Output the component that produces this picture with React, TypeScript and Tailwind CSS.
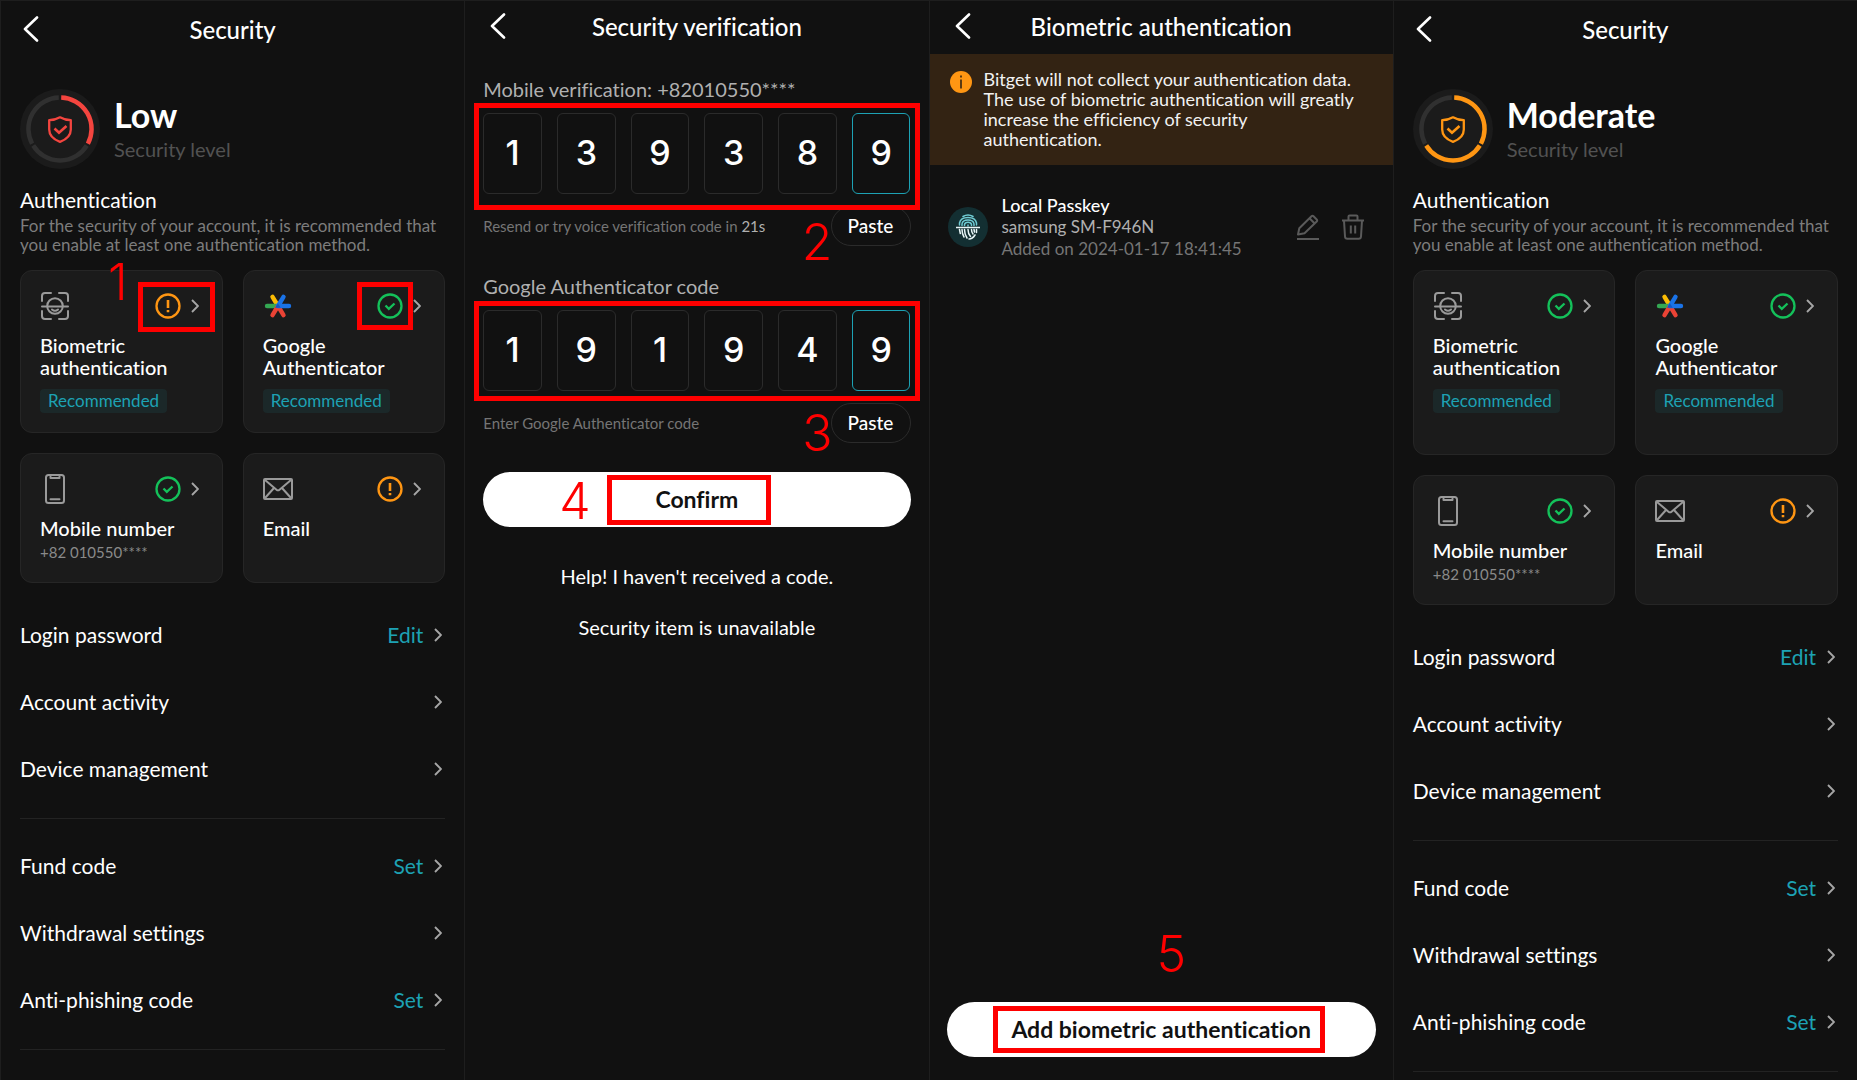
import React from "react";
import { clsx } from "clsx";

type Status = "ok" | "warn";
type IconName = "face" | "google" | "phone" | "mail";

interface Method {
  icon: IconName;
  title: string;
  status: Status;
  recommended?: boolean;
  note?: string;
  statusMark?: boolean;
  rowMark?: boolean;
}

interface Item {
  label: string;
  action?: string;
}

const groups: Item[][] = [
  [
    { label: "Login password", action: "Edit" },
    { label: "Account activity" },
    { label: "Device management" },
  ],
  [
    { label: "Fund code", action: "Set" },
    { label: "Withdrawal settings" },
    { label: "Anti-phishing code", action: "Set" },
  ],
];

function BackIcon() {
  return (
    <svg viewBox="0 0 16 26" className="h-[26px] w-4" fill="none" stroke="white" strokeWidth="2.6" strokeLinecap="round" strokeLinejoin="round">
      <path d="M14 1.500 2 13l12 11.500" />
    </svg>
  );
}

function Chevron() {
  return (
    <svg viewBox="0 0 8 14" className="h-3.5 w-2 shrink-0" fill="none" stroke="#a6a6a6" strokeWidth="1.9">
      <path d="m1 1 6 6-6 6" />
    </svg>
  );
}

function StatusIcon({ status }: { status: Status }) {
  return status === "ok" ? (
    <svg viewBox="0 0 26 26" className="size-[26px]" fill="none" stroke="#14c15a" strokeWidth="2.300">
      <circle cx="13" cy="13" r="11.500" />
      <path d="m8.500 12.500 3.300 3.300 5.700-5.300" />
    </svg>
  ) : (
    <svg viewBox="0 0 26 26" className="size-[26px]" fill="none" stroke="#ff9613" strokeWidth="2.300">
      <circle cx="13" cy="13" r="11.500" />
      <path d="M13 7v8M13 17v2.200" strokeWidth="2.600" />
    </svg>
  );
}

function MethodIcon({ name }: { name: IconName }) {
  const line = { fill: "none", stroke: "#9a9a9a", strokeWidth: 2, strokeLinecap: "round", strokeLinejoin: "round" } as const;
  if (name === "google") {
    return (
      <svg viewBox="0 0 30 30" className="size-[30px]" fill="none" strokeWidth="4.400" strokeLinecap="round">
        <path d="M15 15 9.500 5.800" stroke="#fbbc04" />
        <path d="M15 15H4" stroke="#34a853" />
        <path d="M15 15 9.500 24.200M15 15l5.500 9.200" stroke="#ea4335" />
        <path d="m15 15 5.500-9.200M15 15h11" stroke="#1a73e8" />
        <path d="m14.900 12.200 2.800 4.600h-5.600z" fill="#1557c0" />
      </svg>
    );
  }
  if (name === "face") {
    return (
      <svg viewBox="0 0 30 30" className="size-[30px]" {...line}>
        <path d="M2 10V5q0-3 3-3h6M19 2h6q3 0 3 3v5M28 20v5q0 3-3 3h-6M11 28H5q-3 0-3-3v-5M2 15.500h26" />
        <circle cx="15" cy="15" r="7.800" />
        <path d="M12 18.500q3 2.600 6 0" />
      </svg>
    );
  }
  if (name === "phone") {
    return (
      <svg viewBox="0 0 30 30" className="size-[30px]" {...line}>
        <rect x="6" y="1" width="18" height="28" rx="2.500" />
        <path d="M10.500 2.500v1.500h9V2.500M10.500 25.300h9" />
      </svg>
    );
  }
  return (
    <svg viewBox="0 0 30 30" className="size-[30px]" {...line}>
      <rect x="1" y="5" width="28" height="20" rx="1" />
      <path d="m2 6 11.500 9.700q1.500 1.200 3 0L28 6M2 24l9-10M28 24l-9-10" />
    </svg>
  );
}

function LevelRing({ level }: { level: 1 | 2 }) {
  const color = level === 1 ? "#f4453f" : "#ff9613";
  return (
    <svg viewBox="0 0 80 80" className="size-20" fill="none" stroke="#303030">
      <circle cx="40" cy="40" r="40" fill="#1b1b1b" stroke="none" />
      <g strokeWidth="4.500">
        <path d="M41.200 8.500A31.500 31.500 0 0 1 67.900 54.700" stroke={color} />
        <path d="M66.800 56.500A31.500 31.500 0 0 1 13.200 56.500" stroke={level === 2 ? color : "#303030"} />
        <path d="M12.100 54.700A31.500 31.500 0 0 1 38.800 8.500" />
      </g>
      <path d="M40 28.300c3.500 2 7 2.900 10.800 2.900v9.300c0 6-4.400 10-10.800 12.300-6.400-2.300-10.800-6.300-10.800-12.300v-9.300c3.800 0 7.300-.9 10.800-2.900z" stroke={color} strokeWidth="2.300" strokeLinejoin="round" />
      <path d="m34.500 39.500 4.500 4.300 7.500-6.800" stroke={color} strokeWidth="2.600" />
    </svg>
  );
}

// Red frame drawn around the element it is placed in.
function Frame({ className }: { className: string }) {
  return <span aria-hidden="true" className={clsx("pointer-events-none absolute border-[5px] border-[#fe0000]", className)} />;
}

function Step({ children, className }: { children: React.ReactNode; className: string }) {
  return (
    <span className={clsx("pointer-events-none absolute z-10 font-['Inter'] text-[50px] leading-[50px] font-light text-[#fe0000]", className)}>
      {children}
    </span>
  );
}

function Header({ title, tall }: { title: string; tall?: boolean }) {
  return (
    <header className={clsx("relative flex justify-center", tall ? "h-[59px] pt-[13px]" : "h-[53px] pt-2.5")}>
      <button type="button" aria-label="Back" className={clsx("absolute", tall ? "top-[15px] left-[22px]" : "top-3 left-[25px]")}>
        <BackIcon />
      </button>
      <h1 className="text-2xl font-medium">{title}</h1>
    </header>
  );
}

function MethodCard({ method, roomy }: { method: Method; roomy?: boolean }) {
  return (
    <div className={clsx(
      "rounded-xl border border-[#262626] bg-[#1b1b1b] px-[19px] pt-5",
      method.recommended ? (roomy ? "h-[185px]" : "h-[163px]") : "h-[130px]"
    )}>
      <div className="flex items-center justify-between">
        <MethodIcon name={method.icon} />
        <button type="button" aria-label={`Open ${method.title}`} className="relative flex items-center gap-2.5 pr-1">
          <StatusIcon status={method.status} />
          <Chevron />
          {method.rowMark && <Frame className="-top-[11px] -right-3 h-[50px] w-[77px]" />}
          {method.statusMark && <Frame className="-top-[11px] -left-5 h-12 w-14" />}
        </button>
      </div>
      <h3 className={clsx("mt-[13px] text-[20px] leading-[22px] font-medium", method.recommended && "max-w-[140px]")}>{method.title}</h3>
      {method.recommended && (
        <span className="mt-[11px] inline-block h-6 rounded bg-[#1b2829] px-2 text-[17px] leading-[23px] text-[#1da2b4]">Recommended</span>
      )}
      {method.note && <p className="mt-0.5 text-[15px] leading-[22px] text-[#8a8a8a]">{method.note}</p>}
    </div>
  );
}

interface SecurityProps {
  level: 1 | 2;
  levelName: string;
  methods: Method[];
  step?: string;
}

function SecurityPanel({ level, levelName, methods, step }: SecurityProps) {
  return (
    <section className="border-t border-l border-[#1e1e1e]">
      <Header title="Security" tall />
      <div className="px-[19px] pt-[29px]">
        <div className="flex items-center gap-3.5">
          <LevelRing level={level} />
          <div className="pt-0.5">
            <p className="text-[34px] leading-[38px] font-bold">{levelName}</p>
            <p className="text-[20px] leading-[30px] text-[#525252]">Security level</p>
          </div>
        </div>
        <h2 className="mt-[19px] text-[21px] leading-6">Authentication</h2>
        <div className="relative">
          <p className="mt-1 text-[17px] leading-[19px] text-[#7d7d7d]">
            For the security of your account, it is recommended that you enable at least one authentication method.
          </p>
          {step && <Step className="top-[41px] left-[88px]">{step}</Step>}
        </div>
        <div className="mt-4 grid grid-cols-2 gap-5">
          {methods.map((m) => <MethodCard key={m.title} method={m} roomy={level === 2} />)}
        </div>
        <div className="mt-[5px]">
          {groups.map((items) => (
            <ul key={items[0].label} className="border-b border-[#232323] pt-[13px] pb-4">
              {items.map((item) => (
                <li key={item.label}>
                  <a href="#" className="flex h-[67px] items-center pr-[3px] text-[21px]">
                    <span>{item.label}</span>
                    <span className="mr-[11px] ml-auto text-[#1da2b4]">{item.action}</span>
                    <Chevron />
                  </a>
                </li>
              ))}
            </ul>
          ))}
        </div>
      </div>
    </section>
  );
}

interface CodeProps {
  label: string;
  code: string;
  hint: React.ReactNode;
  step: string;
  stepClass: string;
  frameClass: string;
}

function CodeField({ label, code, hint, step, stepClass, frameClass }: CodeProps) {
  return (
    <fieldset>
      <legend className="text-[20px] leading-6 text-[#b0b0b0]">{label}</legend>
      <div className="relative mt-3 grid grid-cols-6 gap-[15px]">
        {code.split("").map((digit, i) => (
          <input
            key={i}
            aria-label={`${label} digit ${i + 1}`}
            defaultValue={digit}
            maxLength={1}
            inputMode="numeric"
            className={clsx(
              "h-[81px] w-full min-w-0 rounded-md border bg-transparent pb-0.5 text-center font-['Inter'] text-[34px] font-medium outline-none",
              i === 5 ? "border-[#1da2b4]" : "border-[#2b2b2b]"
            )}
          />
        ))}
        <Frame className={clsx("z-10", frameClass)} />
      </div>
      <div className="relative mt-3 flex items-center justify-between">
        <p className="text-[15px] text-[#757575]">{hint}</p>
        <button type="button" className="h-10 w-20 rounded-full border border-[#2b2b2b] text-[19px] font-medium">Paste</button>
        <Step className={stepClass}>{step}</Step>
      </div>
    </fieldset>
  );
}

function VerificationPanel() {
  return (
    <section className="border-t border-l border-[#1e1e1e]">
      <Header title="Security verification" />
      <div className="px-[18px] pt-[23px]">
        <div className="flex flex-col gap-7">
          <CodeField
            label="Mobile verification: +82010550****"
            code="139389"
            hint={<>Resend or try voice verification code in <span className="text-[#b0b0b0]">21s</span></>}
            step="2"
            stepClass="top-[11px] right-[78px]"
            frameClass="-inset-x-[9px] -top-2.5 -bottom-4"
          />
          <CodeField
            label="Google Authenticator code"
            code="191949"
            hint="Enter Google Authenticator code"
            step="3"
            stepClass="top-[5px] right-[78px]"
            frameClass="-inset-x-[9px] -top-[9px] -bottom-2.5"
          />
        </div>
        <button type="button" className="relative mt-[29px] h-[55px] w-full rounded-full bg-white text-[23px] font-bold text-[#111]">
          Confirm
          <Frame className="top-[3px] left-[124px] h-[50px] w-[164px]" />
          <Step className="top-1 left-[76px]">4</Step>
        </button>
        <div className="mt-[34px] flex flex-col items-center gap-[21px] text-[20px] leading-[30px]">
          <a href="#">Help! I haven't received a code.</a>
          <a href="#">Security item is unavailable</a>
        </div>
      </div>
    </section>
  );
}

function BiometricPanel() {
  return (
    <section className="flex flex-col border-t border-l border-[#1e1e1e]">
      <Header title="Biometric authentication" />
      <div className="flex gap-3 bg-[#332313] pt-[15px] pr-6 pb-4 pl-5">
        <svg viewBox="0 0 22 22" className="mt-0.5 size-[22px] shrink-0">
          <circle cx="11" cy="11" r="11" fill="#ff9613" />
          <path d="M11 4.500v2M11 8.500v9" stroke="#332313" strokeWidth="1.600" />
        </svg>
        <p className="text-[18px] leading-5 text-[#f2f2f2]">
          Bitget will not collect your authentication data. The use of biometric authentication will greatly increase the efficiency of security authentication.
        </p>
      </div>
      <div className="mt-[29px] flex items-center px-[18px]">
        <span className="flex size-10 items-center justify-center rounded-full bg-[#132f32]">
          <svg viewBox="0 0 24 26" className="h-[26px] w-6" fill="none" stroke="#6fcbd3" strokeWidth="1.500" strokeLinecap="round">
            <path d="M7 2.500Q12-.5 17 2.500M3.500 11V9q1-5.500 8.500-5.500T20.500 9v2M6 11.500V10q.5-4 6-4t6 4v1.500M8.500 11.500v-1q.5-2.200 3.500-2.200t3.500 2.200v1M12 11v1" />
            <path d="M0 13.500h24M3.500 15.500l.8 4M6 15.500q0 4.500 2 7.500M8.500 15.500q0 4.500 2.500 8.500M12 15.500q0 4 2.500 7M15.500 15.500q0 2.500 1.500 4.500M18 15.500l.5 2.500M13 25q3.500 0 6-4M20.500 15.500v3" stroke="#e8f6f7" />
          </svg>
        </span>
        <div className="ml-3.5 text-[17px] leading-[22px]">
          <h2 className="text-[18px] leading-[22px] font-medium">Local Passkey</h2>
          <p className="text-[#b0b0b0]">samsung SM-F946N</p>
          <p className="text-[#757575]">Added on 2024-01-17 18:41:45</p>
        </div>
        <div className="mr-2.5 ml-auto flex gap-[21px]">
          <button type="button" aria-label="Rename passkey">
            <svg viewBox="0 0 24 26" className="h-[26px] w-6" fill="none" stroke="#5a5a5a" strokeWidth="2" strokeLinejoin="round">
              <path d="M1 25h22M2 20.500l1.300-6.300L15.500 2.300q1-1 2 0L20.700 5.500q1 1 0 2L8.500 19.200zM13.500 4.300l5.200 5.200" />
            </svg>
          </button>
          <button type="button" aria-label="Delete passkey">
            <svg viewBox="0 0 24 26" className="h-[26px] w-6" fill="none" stroke="#5a5a5a" strokeWidth="2" strokeLinejoin="round">
              <path d="M1 6.500h22M7.500 6V2.500q0-1 1-1h7q1 0 1 1V6M3 6.500l1 16q.2 2.300 2.300 2.300h11.400q2.100 0 2.300-2.300l1-16M9.800 11.500v8M14.200 11.500v8" />
            </svg>
          </button>
        </div>
      </div>
      <div className="mt-auto px-[17px] pb-[23px]">
        <button type="button" className="relative h-[55px] w-full rounded-full bg-white text-[23px] font-bold text-[#111]">
          Add biometric authentication
          <Frame className="top-1 right-[51px] bottom-1 left-[46px]" />
          <Step className="-top-[73px] left-[210px]">5</Step>
        </button>
      </div>
    </section>
  );
}

const face: Method = { icon: "face", title: "Biometric authentication", status: "ok", recommended: true };
const google: Method = { icon: "google", title: "Google Authenticator", status: "ok", recommended: true };
const mobile: Method = { icon: "phone", title: "Mobile number", status: "ok", note: "+82 010550****" };
const email: Method = { icon: "mail", title: "Email", status: "warn" };

export default function App() {
  return (
    <main className="grid min-h-screen grid-cols-4 bg-[#111] font-['Lato','Noto_Sans',sans-serif] text-white [font-variant-ligatures:none]">
      <SecurityPanel
        level={1}
        levelName="Low"
        step="1"
        methods={[{ ...face, status: "warn", rowMark: true }, { ...google, statusMark: true }, mobile, email]}
      />
      <VerificationPanel />
      <BiometricPanel />
      <SecurityPanel level={2} levelName="Moderate" methods={[face, google, mobile, email]} />
    </main>
  );
}
